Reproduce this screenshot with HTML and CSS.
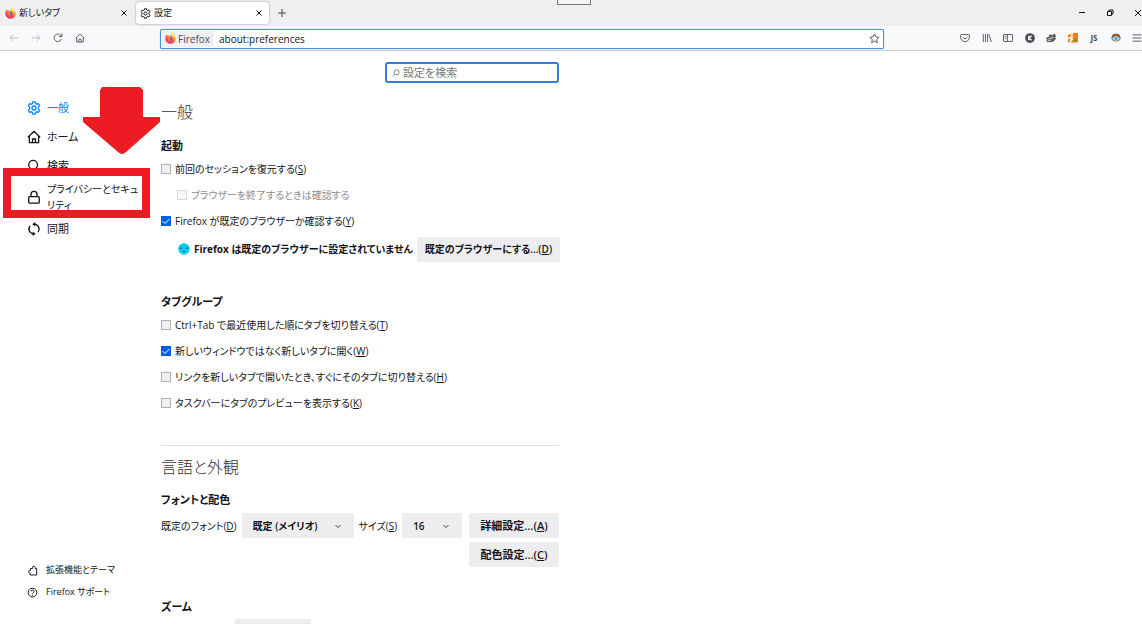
FILE: index.html
```html
<!DOCTYPE html>
<html lang="ja">
<head>
<meta charset="utf-8">
<title>設定</title>
<link rel="stylesheet" href="styles.css">
</head>
<body>
<svg class="defs" aria-hidden="true">
  <defs>
    <radialGradient id="flame" cx="75%" cy="15%" r="95%">
      <stop offset="0" stop-color="#fff04a"/><stop offset=".4" stop-color="#ffa01f"/><stop offset=".7" stop-color="#ff4a3f"/><stop offset="1" stop-color="#e8289a"/>
    </radialGradient>
    <symbol id="firefox" viewBox="0 0 16 16">
      <path d="M15 5.500C14.500 4.500 13.600 3.500 12.800 3.100 12 1.800 10.900 1 10.400 0 9.500.7 9 1.900 8.900 3 7.500 3 6.300 3.500 5.400 4.200 4.800 3.900 4.600 3 4.600 2.400 3.800 2.800 3.300 3.600 3 4.200 2.600 3.900 2.400 3.200 2.400 2.700 1 4.200.5 6.400.5 8.200a7.500 7.500 0 0 0 15 .2c0-1-.1-2-.5-2.900z" fill="url(#flame)"/>
      <circle cx="8" cy="8.300" r="3.200" fill="#8a48e0"/>
      <path d="M3 5.500c1.600-.7 3.200.1 4 1.100 1 .1 1.900.1 2 .5-.3.900-1.800 1-2.200 1.500-.3 1.300 1.100 1.900 2.200 1.500-1.200 1.900-5 1.600-5.500-1.600z" fill="#ff8a28"/>
    </symbol>
    <symbol id="gear" viewBox="0 0 16 16">
      <path d="M6.700 1h2.600l.5 2 1.300.7 2-.6 1.300 2.300L13 7v2l1.400 1.600-1.300 2.300-2-.6-1.300.7-.5 2H6.700l-.5-2-1.300-.7-2 .6-1.300-2.300L3 9V7L1.600 5.400l1.300-2.300 2 .6L6.200 3z"/><circle cx="8" cy="8" r="2.300"/>
    </symbol>
    <symbol id="home" viewBox="0 0 16 16"><path d="M1 8.300 8 1.500l7 6.800M2.700 7v7.500h10.600V7M6.300 14.500v-4.200h3.400v4.200"/></symbol>
  </defs>
</svg>

<header class="chrome">
  <div class="tabs">
    <div class="tab"><svg class="fx logo"><use href="#firefox"/></svg><span class="tab-name">新しいタブ</span><button class="plain" aria-label="タブを閉じる"><svg class="x" viewBox="0 0 6 6"><path d="M.5.5l5 5M5.500.5l-5 5"/></svg></button></div>
    <div class="tab active"><svg class="fx tab-gear"><use href="#gear"/></svg><span class="tab-name">設定</span><button class="plain" aria-label="タブを閉じる"><svg class="x" viewBox="0 0 6 6"><path d="M.5.5l5 5M5.500.5l-5 5"/></svg></button></div>
    <button class="plain new-tab" aria-label="新しいタブ"><svg class="plus" viewBox="0 0 8 8"><path d="M4 0v8M0 4h8"/></svg></button>
    <div class="window-buttons">
      <button class="plain" aria-label="最小化"><svg viewBox="0 0 8 8"><path d="M1 3.500h6"/></svg></button>
      <button class="plain" aria-label="元に戻す"><svg viewBox="0 0 8 8"><path d="M1.500 2.500h4v4h-4zM3 2.500v-1.500h4v4H5.500"/></svg></button>
      <button class="plain" aria-label="閉じる"><svg viewBox="0 0 8 8"><path d="M1 1l6 6M7 1 1 7"/></svg></button>
    </div>
    <span class="grip"></span>
  </div>
  <div class="nav">
    <div class="nav-buttons">
      <button class="plain off" aria-label="戻る"><svg viewBox="0 0 16 16"><path d="M15 8H2M7 3 2 8l5 5"/></svg></button>
      <button class="plain off" aria-label="進む"><svg viewBox="0 0 16 16"><path d="M1 8h13M9 3l5 5-5 5"/></svg></button>
      <button class="plain" aria-label="再読み込み"><svg viewBox="0 0 16 16"><path d="M13.500 9.500A6 6 0 1 1 12.500 4L14 5.500M14.200 1v4.700H9.500"/></svg></button>
      <button class="plain" aria-label="ホーム"><svg viewBox="0 0 16 16"><use href="#home"/></svg></button>
    </div>
    <div class="urlbar">
      <span class="identity"><svg class="fx logo"><use href="#firefox"/></svg>Firefox</span>
      <input class="url" type="text" aria-label="アドレス" value="about:preferences">
      <button class="plain" aria-label="ブックマーク"><svg class="star" viewBox="0 0 16 16"><path d="M8 1.300l2 4.300 4.700.6-3.500 3.200.9 4.700L8 11.800l-4.100 2.300.9-4.700L1.300 6.200 6 5.600z"/></svg></button>
    </div>
    <div class="tools">
      <button class="plain" aria-label="Pocket"><svg viewBox="0 0 16 16"><path d="M2 2.500h12q1 0 1 1V7a7 7 0 0 1-14 0V3.500q0-1 1-1zM4.500 6.500 8 9.700l3.500-3.200"/></svg></button>
      <button class="plain" aria-label="ライブラリ"><svg viewBox="0 0 16 16"><path d="M2 1.500v13M5.500 1.500v13M9 1.500v13M11 2l4 12.500"/></svg></button>
      <button class="plain" aria-label="サイドバー"><svg viewBox="0 0 16 16"><path d="M1.500 2.500h13q.7 0 .7.700v9.600q0 .7-.7.700h-13q-.7 0-.7-.7V3.200q0-.7.7-.7zM7 2.500v11M2.800 5.500h2.400M2.800 8.500h2.400"/></svg></button>
      <button class="plain" aria-label="アカウント"><svg viewBox="0 0 16 16"><circle cx="8" cy="8" r="7.800" fill="#4a4a58" stroke="none"/><path class="white" d="M6 4.500v7M10.500 4.500 6.500 8l4 3.500"/></svg></button>
      <button class="plain" aria-label="拡張機能"><svg viewBox="0 0 16 16"><path class="hat" d="M1 8l4-1 1-4 4 1 4-2 1 2-1 3 1 2-2 3-5 2-7-1 2-2z"/><path d="M4 9.500 12 7M3 12l5-.5" stroke="#ddd"/></svg></button>
      <button class="plain" aria-label="アドオン"><svg viewBox="0 0 16 16"><path class="orange" d="M8 0h8v15H4l5-6H6l3-3H7zM0 3l6-2-2 5-4 2zM0 10l4-1-2 6H0z"/><circle cx="11" cy="11" r="2.200" fill="#38a853" stroke="none"/></svg></button>
      <button class="plain js">JS</button>
      <button class="plain" aria-label="プロフィール"><svg viewBox="0 0 16 16"><path class="hair" d="M1 9C0 3 4 1 8 1s8 2 7 8l-2 3H3z"/><path class="face" d="M3 6l5-2 5 2v6l-5 3-5-3z"/><circle class="lens" cx="4.500" cy="9" r="2.700"/><circle class="lens" cx="11.500" cy="9" r="2.700"/></svg></button>
      <button class="plain" aria-label="メニュー"><svg viewBox="0 0 16 16"><path d="M1 3h14M1 8h14M1 13h14"/></svg></button>
    </div>
  </div>
</header>

<div class="page">
  <aside class="sidebar">
    <nav class="categories">
      <a class="selected" href="#general"><svg><use href="#gear"/></svg><span>一般</span></a>
      <a href="#home-page"><svg><use href="#home"/></svg><span>ホーム</span></a>
      <a href="#search"><svg viewBox="0 0 16 16"><circle cx="7" cy="6.500" r="5"/><path d="M10.500 10l4.500 5"/></svg><span>検索</span></a>
      <a class="two-line" href="#privacy"><svg viewBox="0 0 16 16"><rect x="2" y="7.500" width="12" height="7.500" rx="1"/><path d="M4.500 7.500V5a3.500 3.500 0 0 1 7 0v2.500"/></svg><span>プライバシーとセキュリティ</span></a>
      <a href="#sync"><svg viewBox="0 0 16 16"><path d="M8.500 2.500a5.500 5.500 0 0 1 4 9M7.500 13.500a5.500 5.500 0 0 1-4-9"/><path class="tip" d="M9.500 0v5L6 2.500zM6.500 11v5l3.500-2.500z"/></svg><span>同期</span></a>
    </nav>
    <nav class="support">
      <a href="#addons"><svg viewBox="0 0 16 16"><path d="M5 5h3V3.500a1.800 1.800 0 0 1 3.600 0V5H14v9.500H4.500V11.500H4a1.600 1.600 0 0 1 0-3.500h1z"/></svg><span>拡張機能とテーマ</span></a>
      <a href="#help"><svg viewBox="0 0 16 16"><circle cx="8" cy="8" r="6.300"/><path d="M5.800 6.500a2.200 2.200 0 1 1 3.300 1.900Q8 9 8 10M8 11.200v1.300"/></svg><span>Firefox サポート</span></a>
    </nav>
  </aside>

  <main class="main">
    <div class="search-row"><label class="search"><svg viewBox="0 0 8 8"><circle cx="4.700" cy="3.300" r="2.500"/><path d="M2.900 5.100.7 7.300"/></svg><input type="search" aria-label="設定を検索" placeholder="設定を検索"></label></div>
    <h1>一般</h1>
    <section class="startup">
      <h2>起動</h2>
      <label class="check"><input type="checkbox"><span>前回のセッションを復元する(<u>S</u>)</span></label>
      <label class="check nested"><input type="checkbox" disabled><span>ブラウザーを終了するときは確認する</span></label>
      <label class="check"><input type="checkbox" checked><span>Firefox が既定のブラウザーか確認する(<u>Y</u>)</span></label>
      <div class="default-row">
        <svg viewBox="0 0 12 12"><circle cx="6" cy="6" r="5.800" fill="#0dcbe8"/><path d="M3 4.500v1.500M9 4.500v1.500M5 8.500h2" fill="none" stroke="#164a70" stroke-width="1.200"/></svg>
        <strong>Firefox は既定のブラウザーに設定されていません</strong>
        <button class="btn">既定のブラウザーにする...(<u>D</u>)</button>
      </div>
    </section>
    <section class="tab-group">
      <h2>タブグループ</h2>
      <label class="check"><input type="checkbox"><span>Ctrl+Tab で最近使用した順にタブを切り替える(<u>T</u>)</span></label>
      <label class="check"><input type="checkbox" checked><span>新しいウィンドウではなく新しいタブに開く(<u>W</u>)</span></label>
      <label class="check"><input type="checkbox"><span>リンクを新しいタブで開いたとき、すぐにそのタブに切り替える(<u>H</u>)</span></label>
      <label class="check"><input type="checkbox"><span>タスクバーにタブのプレビューを表示する(<u>K</u>)</span></label>
    </section>
    <hr>
    <h1 class="second">言語と外観</h1>
    <section class="fonts">
      <h2>フォントと配色</h2>
      <div class="font-row">
        <label for="font">既定のフォント(<u>D</u>)</label>
        <select id="font" class="font-select"><option>既定 (メイリオ)</option></select>
        <label for="size">サイズ(<u>S</u>)</label>
        <select id="size" class="size-select"><option>16</option></select>
        <button class="btn">詳細設定...(<u>A</u>)</button>
      </div>
      <button class="btn colors">配色設定...(<u>C</u>)</button>
    </section>
    <section class="zoom">
      <h2>ズーム</h2>
      <select class="zoom-select" aria-label="既定のズーム"><option>100%</option></select>
    </section>
  </main>
</div>
<div class="highlight"></div>
<svg class="arrow" viewBox="0 0 77 68"><path d="M19 0h38l3 3v27h17v5L43 65q-4 4-8 0L0 35v-5h17V3z"/></svg>
</body>
</html>
```

FILE: styles.css
```css
* { box-sizing: border-box; }
body {
  margin: 0;
  height: 100vh;
  overflow: hidden;
  display: flex;
  flex-direction: column;
  background: #fff;
  color: #15141a;
  font: 10px/16px "Open Sans", "Noto Sans CJK JP", sans-serif;
  font-feature-settings: "palt";
}
input, select, button { font: inherit; font-feature-settings: inherit; color: inherit; }
svg { display: block; flex: none; fill: none; stroke: currentColor; }
.defs { position: absolute; width: 0; height: 0; }
.plain { display: flex; align-items: center; justify-content: center; padding: 0; border: 0; background: none; }

.chrome { flex: none; border-bottom: 1px solid #ccccd0; }
.tabs { position: relative; display: flex; height: 26px; background: #efefef; }
.tab { display: flex; align-items: center; gap: 3px; width: 136px; padding: 0 9px 0 5px; }
.tab-name { flex: 1; font-size: 9px; }
.tab.active { width: 133px; padding: 0 7px 0 4px; margin: 2px 0; background: #fff; border-radius: 3px; box-shadow: 0 0 2px #888; }
.fx { width: 11px; height: 11px; }
.logo { stroke: none; }
.tab-gear { stroke-width: 1.4; }
.x { width: 6px; height: 6px; }
.plus { width: 8px; height: 8px; }
.new-tab { width: 26px; color: #444; }
.window-buttons { display: flex; gap: 20px; margin-left: auto; }
.window-buttons svg { width: 8px; height: 8px; }
.grip { position: absolute; left: 50%; top: -1px; width: 34px; height: 6px; margin-left: -14px; border: 1px solid #777; background: #f4f4f4; }

.nav { display: flex; align-items: center; height: 24px; background: #f9f9fb; color: #4a4a55; }
.nav-buttons { display: flex; gap: 12px; width: 160px; padding-left: 9px; }
.nav-buttons svg { width: 10px; height: 10px; stroke-width: 1.4; }
.off { color: #b5b5bb; }
.urlbar { display: flex; align-items: center; flex: 0 1 724px; height: 20px; margin-top: 1px; padding-right: 3px; border: 1px solid #4c8fe0; border-radius: 2px; background: #fff; box-shadow: 0 0 1px #4c8fe0; }
.identity { display: flex; align-items: center; gap: 2px; height: 16px; margin-left: 1px; padding: 0 4px 0 3px; background: #f0f0f4; }
.url { flex: 1; min-width: 0; padding: 0 5px; border: 0; outline: 0; background: none; color: #15141a; }
.star { width: 11px; height: 11px; stroke-width: 1.3; }
.tools { display: flex; justify-content: space-between; width: 182px; margin-left: auto; }
.tools .plain { width: 10px; }
.tools svg { width: 10px; height: 10px; stroke-width: 1.4; }
.tools .js { font-size: 8px; font-weight: 700; }
.white { stroke: #fff; stroke-width: 2; }
.hat { fill: #666; stroke: #444; }
.orange { fill: #f47b13; stroke: none; }
.hair { fill: #805030; stroke: none; }
.face { fill: #f0b06e; stroke: none; }
.lens { fill: #bfe6ff; stroke: #2288d8; }

.page { flex: 1; display: flex; min-height: 0; }
.sidebar { display: flex; flex-direction: column; justify-content: space-between; width: 161px; flex: none; padding: 42px 22px 21px 27px; }
.sidebar a { display: flex; align-items: center; gap: 6px; color: inherit; text-decoration: none; }
.categories { font-size: 11px; }
.categories svg { width: 14px; height: 14px; stroke-width: 1.5; }
.categories a { height: 29px; }
.categories .two-line { height: 34px; font-size: 10px; }
.tip { fill: currentColor; stroke: none; }
.support a { height: 22px; gap: 8px; font-size: 9px; }
.support svg { width: 11px; height: 11px; stroke-width: 1.4; }
.sidebar .selected { color: #0a84ff; }

.main { width: 398px; }
.search-row { display: flex; justify-content: flex-end; padding-top: 11px; }
.search { display: flex; align-items: center; gap: 3px; width: 174px; height: 21px; padding: 0 5px; border: 2px solid #2f7de1; border-radius: 3px; }
.search svg { width: 8px; height: 8px; color: #888; }
.search input { flex: 1; min-width: 0; padding: 0; border: 0; outline: 0; background: none; font-size: 11px; }
.search input::placeholder { color: #777; }
h1 { margin: 17px 0 0; font-size: 16px; line-height: 24px; font-weight: 300; color: #333; }
h2 { margin: 0; font-size: 11px; line-height: 20px; font-weight: 700; }
.startup { padding-top: 12px; }
.check { display: flex; align-items: center; gap: 4px; height: 26px; }
.check input { appearance: none; flex: none; width: 10px; height: 10px; margin: 0; border: 1px solid #b2b2ba; background: #f0f0f4; }
.check input:checked { border: 0; background: #0060df url("data:image/svg+xml,%3Csvg xmlns='http://www.w3.org/2000/svg' viewBox='0 0 10 10'%3E%3Cpath d='M1.500 5l2.500 2.500L8.500 3' fill='none' stroke='white'/%3E%3C/svg%3E"); }
.nested { padding-left: 16px; opacity: .5; }
.default-row { display: flex; align-items: center; gap: 4px; height: 30px; padding-left: 17px; white-space: nowrap; }
.default-row svg { width: 12px; height: 12px; stroke: none; }
.btn { height: 25px; padding: 0 9px; border: 0; border-radius: 2px; background: #ededf0; font-weight: 600; white-space: nowrap; }
.default-row .btn { margin-left: auto; padding: 0 8px; }
.tab-group { padding-top: 28px; }
hr { margin: 29px 0 0; border: 0; border-top: 1px solid #dcdcdf; }
.second { margin-top: 9px; }
.fonts { display: flex; flex-direction: column; padding-top: 11px; }
.font-row { display: flex; align-items: center; gap: 5px; margin-top: 3px; white-space: nowrap; }
select { flex: none; height: 25px; padding: 0 11px; border: 0; border-radius: 2px; appearance: none; font-weight: 600; background: #ededf0 url("data:image/svg+xml,%3Csvg xmlns='http://www.w3.org/2000/svg' viewBox='0 0 8 8'%3E%3Cpath d='M1.500 3l2.500 2.500L6.500 3' fill='none' stroke='%23444'/%3E%3C/svg%3E") right 12px center / 8px no-repeat; }
.font-select { width: 112px; }
.size-select { width: 60px; }
.font-row .btn, .colors { flex: none; width: 90px; padding: 0; font-size: 11px; }
.font-row .btn { margin-left: auto; }
.colors { align-self: flex-end; margin-top: 4px; }
.zoom { padding-top: 30px; }
.zoom-select { display: block; width: 76px; margin: 2px 0 0 74px; }

.highlight { position: absolute; left: 3px; top: 168px; width: 147px; height: 50px; border: 8px solid #ed1c24; }
.arrow { position: absolute; left: 83px; top: 87px; width: 77px; height: 68px; fill: #ed1c24; stroke: none; }
```
